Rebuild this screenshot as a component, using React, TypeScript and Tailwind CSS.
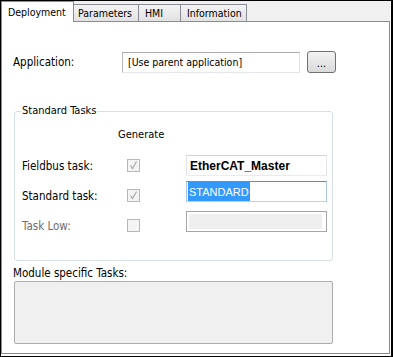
const ui = "font-['DejaVu_Sans_Condensed','Liberation_Sans',sans-serif] text-[11px] leading-[14px]";

function Check({ checked }: { checked: boolean }) {
  return (
    <div className="w-[13px] h-[13px] border border-[#b8b8b8] bg-[#f4f4f4] self-center">
      {checked && (
        <svg width="11" height="11" viewBox="0 0 11 11">
          <path d="M2.5 5.5 L4.5 8.5 L8.5 1.5" fill="none" stroke="#acacac" strokeWidth="1.3" />
        </svg>
      )}
    </div>
  );
}

export default function App() {
  return (
    <div className={`w-[393px] h-[357px] bg-white border-t border-l border-b border-r-2 border-black flex flex-col pr-px pb-[2px] text-black ${ui}`}>
      {/* tab strip */}
      <div className="flex items-end h-[20px] shrink-0 bg-[#f0f0f0] text-[10.5px]">
        <div className="relative z-10 -mb-px h-[21px] w-[73px] bg-white border-t border-l border-r border-[#898c95] pl-[6px] pt-[3px]">
          Deployment
        </div>
        <div className="h-[17px] w-[65px] border-t border-r border-[#898c95] bg-gradient-to-b from-[#f4f4f4] to-[#e2e2e2] pl-[4px] pt-[1px]">
          Parameters
        </div>
        <div className="h-[17px] w-[42px] border-t border-r border-[#898c95] bg-gradient-to-b from-[#f4f4f4] to-[#e2e2e2] pl-[6px] pt-[1px]">
          HMI
        </div>
        <div className="h-[17px] w-[66px] border-t border-r border-[#898c95] bg-gradient-to-b from-[#f4f4f4] to-[#e2e2e2] pl-[6px] pt-[1px]">
          Information
        </div>
      </div>

      {/* panel */}
      <div className="flex-1 border border-[#898c95] px-[11px] flex flex-col">
        <div className="mt-[29px] flex items-center h-[22px]">
          <div className="w-[109px] text-[11.5px]">Application:</div>
          <div className="w-[178px] h-[21px] border border-t-[#a9abb0] border-l-[#b4b6ba] border-r-[#dfe1e5] border-b-[#e3e6ea] flex items-center pl-[5px] text-[10.5px]">
            [Use parent application]
          </div>
          <button className="ml-[7px] w-[29px] h-[22px] rounded-[3px] border border-[#707070] bg-gradient-to-b from-[#f3f3f3] to-[#dadada] flex items-end justify-center pb-[3px] leading-none">
            ...
          </button>
        </div>

        <fieldset className="mt-[31px] ml-px w-[319px] border border-[#d5dfe5] rounded-[3px] pb-[20px]">
          <legend className="ml-[6px] px-[1px] leading-[14px]">Standard Tasks</legend>
          <div className="mt-[10px] pl-[103px]">Generate</div>
          <div className="mt-[8px] ml-[7px] grid grid-cols-[105px_59px_141px] grid-rows-[30px_30px_30px] text-[11.5px]">
            <div className="self-center pt-[2px]">Fieldbus task:</div>
            <Check checked />
            <div className="self-start mt-[5px] h-[21px] border border-t-[#d0d4da] border-l-[#e2e3ea] border-r-[#e2e3ea] border-b-[#e8ebef] flex items-center pl-[3px] font-['Liberation_Sans',sans-serif] font-bold text-[12px]">
              EtherCAT_Master
            </div>

            <div className="self-center pt-[2px]">Standard task:</div>
            <Check checked />
            <div className="self-start mt-px h-[21px] border border-t-[#5d8fc4] border-l-[#a9c7e8] border-r-[#a9c7e8] border-b-[#b7d3ee] flex items-center pl-[1px] font-['Liberation_Sans',sans-serif] text-[11px]">
              <span className="bg-[#3399ff] text-white h-[19px] flex items-center px-[1px]">STANDARD</span>
            </div>

            <div className="self-center pt-[2px] text-[#6d6d6d]">Task Low:</div>
            <Check checked={false} />
            <div className="self-start mt-px h-[21px] border border-[#a6a6a6] p-[2px]">
              <div className="h-full w-[133px] bg-[#efefef]" />
            </div>
          </div>
        </fieldset>

        <div className="mt-[5px] text-[11.5px]">Module specific Tasks:</div>
        <div className="mt-px ml-px w-[319px] h-[63px] border border-[#acacac] rounded-[2px] bg-[#f0f0f0]" />
      </div>
    </div>
  );
}
